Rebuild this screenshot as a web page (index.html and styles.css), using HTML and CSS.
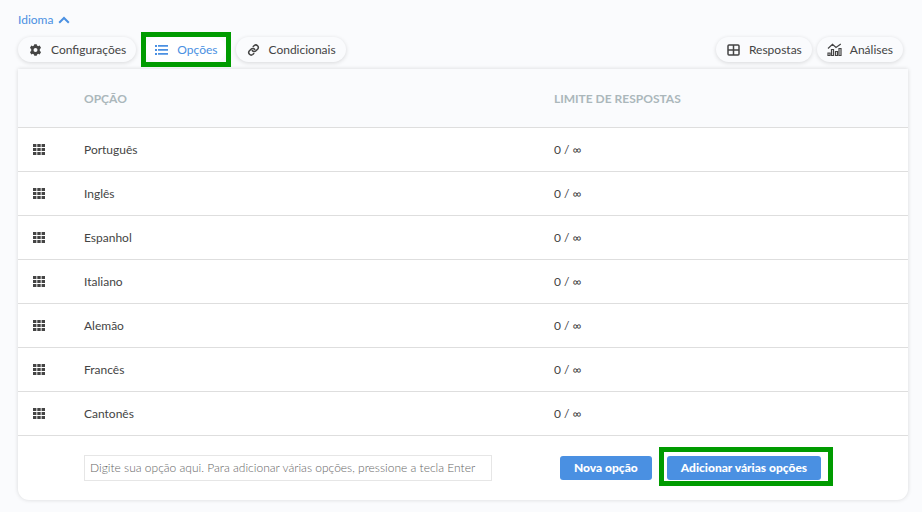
FILE: index.html
```html
<!DOCTYPE html>
<html lang="pt-BR">
<head>
<meta charset="utf-8">
<meta name="viewport" content="width=device-width, initial-scale=1">
<title>Idioma</title>
<link rel="stylesheet" href="styles.css">
</head>
<body>
<svg class="sprite" aria-hidden="true">
  <symbol id="grid" viewBox="0 0 12 11">
    <path d="M0 0h3.400v3H0zM4.300 0h3.400v3H4.300zM8.600 0H12v3H8.600zM0 4h3.400v3H0zM4.300 4h3.400v3H4.300zM8.600 4H12v3H8.600zM0 8h3.400v3H0zM4.300 8h3.400v3H4.300zM8.600 8H12v3H8.600z"/>
  </symbol>
</svg>
<main class="page">
  <a class="title" href="#">Idioma
    <svg class="chevron" viewBox="0 0 12 8" width="12" height="8"><path d="M1.200 6.800 6 2l4.800 4.800"/></svg>
  </a>
  <nav class="tabs">
    <button class="pill" type="button">
      <svg class="icon" viewBox="0 0 24 24"><path fill-rule="evenodd" d="M20.500 14c.1-.6.2-1.300.2-2s-.1-1.400-.2-2l2.600-2-2.700-4.800-3.200 1.300c-.8-.6-1.500-1-2.300-1.300L14.500.5h-5L9 3.200c-.8.3-1.500.7-2.300 1.300L3.600 3.200.900 8l2.600 2c-.1.600-.2 1.300-.2 2s.1 1.400.2 2L.9 16l2.700 4.800 3.200-1.300c.7.600 1.400 1 2.200 1.300l.5 2.700h5l.5-2.700c.8-.3 1.500-.7 2.200-1.300l3.200 1.300 2.700-4.800zM12 16a4 4 0 1 1 0-8 4 4 0 0 1 0 8z"/></svg>
      Configurações
    </button>
    <span class="highlight">
      <button class="pill pill-active" type="button">
        <svg class="icon" viewBox="0 0 13 12"><path d="M0 1h2v2H0zM0 5h2v2H0zM0 9h2v2H0zM3 1h10v1.800H3zM3 5h10v1.800H3zM3 9h10v1.800H3z"/></svg>
        Opções
      </button>
    </span>
    <button class="pill" type="button">
      <svg class="icon icon-line" viewBox="0 0 24 24"><path d="M9.500 13a5 5 0 0 0 7.500.5l3.500-3.500a5 5 0 0 0-7-7L11.500 5M14.500 11a5 5 0 0 0-7.500-.5L3.500 14a5 5 0 0 0 7 7l2-2"/></svg>
      Condicionais
    </button>
    <span class="tabs-end">
      <button class="pill" type="button">
        <svg class="icon icon-table" viewBox="0 0 13 12"><rect x="1" y="1" width="11" height="10" rx="1"/><path d="M1 6h11M6.500 1v10"/></svg>
        Respostas
      </button>
      <button class="pill pill-chart" type="button">
        <svg class="icon icon-chart" viewBox="0 0 15 13"><path d="M1 5.500 5.500 1.300 9 4.500 13.800 1M1 10h2v2.500H1zM4.500 6.500h2v6h-2zM8.500 8.500h2v4h-2zM12 5.500h2v7h-2z"/></svg>
        Análises
      </button>
    </span>
  </nav>
  <section class="panel">
    <table class="options">
      <colgroup><col class="col-drag"><col class="col-name"><col></colgroup>
      <thead>
        <tr><th></th><th scope="col">OPÇÃO</th><th scope="col">LIMITE DE RESPOSTAS</th></tr>
      </thead>
      <tbody>
        <tr><td class="drag"><svg class="grip"><use href="#grid"/></svg></td><td>Português</td><td>0 / ∞</td></tr>
        <tr><td class="drag"><svg class="grip"><use href="#grid"/></svg></td><td>Inglês</td><td>0 / ∞</td></tr>
        <tr><td class="drag"><svg class="grip"><use href="#grid"/></svg></td><td>Espanhol</td><td>0 / ∞</td></tr>
        <tr><td class="drag"><svg class="grip"><use href="#grid"/></svg></td><td>Italiano</td><td>0 / ∞</td></tr>
        <tr><td class="drag"><svg class="grip"><use href="#grid"/></svg></td><td>Alemão</td><td>0 / ∞</td></tr>
        <tr><td class="drag"><svg class="grip"><use href="#grid"/></svg></td><td>Francês</td><td>0 / ∞</td></tr>
        <tr><td class="drag"><svg class="grip"><use href="#grid"/></svg></td><td>Cantonês</td><td>0 / ∞</td></tr>
      </tbody>
    </table>
    <form class="add">
      <input class="add-input" type="text" aria-label="Nova opção" placeholder="Digite sua opção aqui. Para adicionar várias opções, pressione a tecla Enter">
      <div class="actions">
        <button class="button" type="button">Nova opção</button>
        <span class="highlight highlight-wide"><button class="button" type="button">Adicionar várias opções</button></span>
      </div>
    </form>
  </section>
</main>
</body>
</html>
```
FILE: styles.css
```css
* { box-sizing: border-box; }

body {
  margin: 0;
  background: #fafbfd;
  color: #444;
  font: 12px/16px Lato, sans-serif;
}

button, input { font: inherit; }

.sprite { position: absolute; width: 0; height: 0; }

.page { padding: 12px 14px 12px 18px; }

.title {
  display: flex;
  align-items: center;
  gap: 5px;
  width: max-content;
  color: #4a90e2;
  text-decoration: none;
}

.chevron { fill: none; stroke: currentColor; stroke-width: 2; }

.tabs {
  display: flex;
  align-items: center;
  gap: 10px;
  height: 25px;
  margin: 9px 5px 7px 0;
}

.tabs-end { display: flex; gap: 5px; margin-left: auto; }

.pill {
  display: flex;
  align-items: center;
  gap: 9px;
  height: 25px;
  padding: 0 10px 0 11px;
  border: 0;
  border-radius: 13px;
  background: #fafbfd;
  color: #444;
  box-shadow: 0 1px 4px rgba(0, 0, 0, 0.14);
  white-space: nowrap;
}

.pill-active { background: #fff; color: #4a90e2; box-shadow: none; padding-right: 8px; padding-left: 9px; }
.pill-chart { gap: 8px; padding-left: 10px; }

.icon { width: 13px; height: 12px; fill: currentColor; }
.icon-line { fill: none; stroke: currentColor; stroke-width: 3; stroke-linecap: round; overflow: visible; }
.icon-table { fill: none; stroke: currentColor; stroke-width: 1.500; }
.icon-chart { width: 15px; height: 13px; fill: none; stroke: currentColor; stroke-width: 1.200; }

.highlight { position: relative; }

.highlight::after {
  content: "";
  position: absolute;
  inset: -5px;
  border: 5px solid #009b00;
  pointer-events: none;
}

.highlight-wide::after { inset: -9px -12px -6px -8px; }

.panel {
  overflow: hidden;
  border-radius: 0 0 11px 11px;
  background: #fff;
  box-shadow: 0 0 4px rgba(0, 0, 0, 0.14);
}

.options { width: 100%; border-collapse: collapse; table-layout: fixed; }
.col-drag { width: 66px; }
.col-name { width: 52.8%; }

.options th, .options td {
  height: 44px;
  padding: 2px 0 0;
  border-bottom: 1px solid #dedede;
  text-align: left;
}

.options th {
  height: 58px;
  background: #fafbfd;
  color: #abb7bb;
  font-weight: 700;
}

.options .drag { padding: 0 0 0 15px; }
.grip { display: block; width: 12px; height: 11px; fill: #444; }

.add {
  display: flex;
  align-items: center;
  gap: 68px;
  height: 64px;
  padding: 0 66px;
}

.add-input {
  flex: 0 1 408px;
  min-width: 0;
  height: 26px;
  padding: 0 5px;
  border: 1px solid #e6e6e6;
  background: #fff;
  color: #444;
  font-weight: 300;
}

.add-input::placeholder { color: #666; opacity: 1; }

.actions { display: flex; flex: none; gap: 15px; }

.button {
  height: 24px;
  padding: 0 14px;
  border: 0;
  border-radius: 3px;
  background: #4a90e2;
  color: #fff;
  font-weight: 900;
  white-space: nowrap;
}
```
